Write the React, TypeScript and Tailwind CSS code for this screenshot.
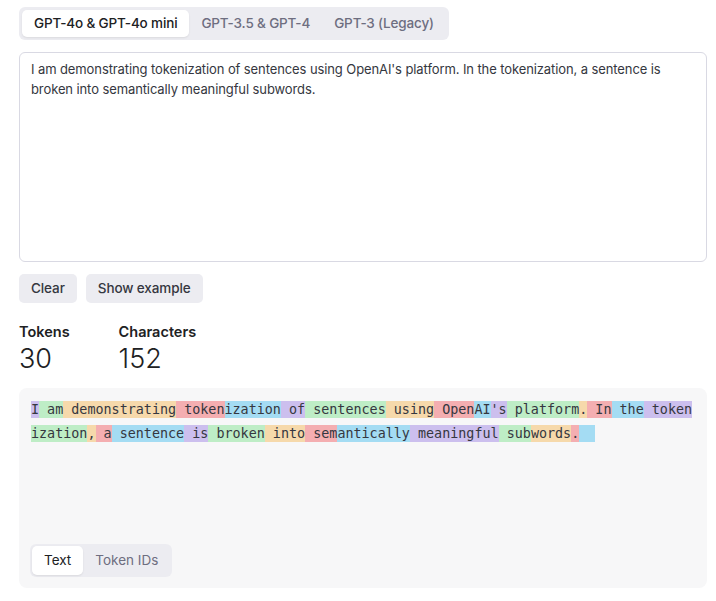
import React from 'react';

const tokenColors = [
  'bg-[rgba(107,64,216,0.3)]',
  'bg-[rgba(104,222,122,0.4)]',
  'bg-[rgba(244,172,54,0.4)]',
  'bg-[rgba(239,65,70,0.4)]',
  'bg-[rgba(39,181,234,0.4)]',
];

const tokens = [
  'I', ' am', ' demonstrating', ' token', 'ization', ' of', ' sentences', ' using', ' Open', 'AI',
  "'s", ' platform', '.', ' In', ' the', ' token', 'ization', ',', ' a', ' sentence',
  ' is', ' broken', ' into', ' sem', 'antically', ' meaningful', ' sub', 'words', '.', '  ',
];

const text =
  "I am demonstrating tokenization of sentences using OpenAI's platform. In the tokenization, a sentence is broken into semantically meaningful subwords.";

export default function App() {
  const [model, setModel] = React.useState(0);
  const [view, setView] = React.useState<'text' | 'ids'>('text');

  const models = ['GPT-4o & GPT-4o mini', 'GPT-3.5 & GPT-4', 'GPT-3 (Legacy)'];

  return (
    <div className="min-h-screen bg-white pl-[19px] pt-[7px] font-['Inter','Noto_Sans',sans-serif] text-[#202123]">
      <div className="w-[688px]">
        {/* model tabs */}
        <div className="inline-flex rounded-md bg-[#ececf1] p-[3px]">
          {models.map((m, i) => (
            <button
              key={m}
              onClick={() => setModel(i)}
              className={`h-[27px] rounded-[5px] px-[12px] text-[13.5px] font-medium tracking-[-0.15px] ${
                model === i ? 'bg-white text-[#202123] shadow-[0_1px_2px_rgba(0,0,0,0.08)]' : 'text-[#6e6e80]'
              }`}
            >
              {m}
            </button>
          ))}
        </div>

        {/* input */}
        <textarea
          defaultValue={text}
          className="mt-[12px] block h-[210px] w-full resize-none rounded-[6px] border border-[#d9d9e3] pl-[11px] pr-[14px] py-[6px] text-[13px] leading-[20px] tracking-[-0.1px] text-[#353740] outline-none"
        />

        {/* actions */}
        <div className="mt-[12px] flex gap-[9px]">
          <button className="h-[29px] rounded-[5px] bg-[#ececf1] px-[12px] text-[13.5px] font-medium tracking-[-0.1px] text-[#353740]">
            Clear
          </button>
          <button className="h-[29px] rounded-[5px] bg-[#ececf1] px-[12px] text-[13.5px] font-medium tracking-[-0.1px] text-[#353740]">
            Show example
          </button>
        </div>

        {/* stats */}
        <div className="mt-[19px] flex gap-[49px]">
          <div>
            <div className="text-[14.5px] font-semibold leading-[20px]">Tokens</div>
            <div className="text-[27px] font-light leading-[34px]">30</div>
          </div>
          <div>
            <div className="text-[14.5px] font-semibold leading-[20px]">Characters</div>
            <div className="text-[27px] font-light leading-[34px]">152</div>
          </div>
        </div>

        {/* output */}
        <div className="mt-[12px] flex h-[200px] flex-col justify-between rounded-[8px] bg-[#f7f7f8] px-[12px] pt-[10px] pb-[11px]">
          <div className="whitespace-pre-wrap break-all font-['DejaVu_Sans_Mono',monospace] text-[13.4px] leading-[24px] text-[#353740]">
            {view === 'text'
              ? tokens.map((t, i) => (
                  <span key={i} className={`py-px ${tokenColors[i % 5]}`}>
                    {t}
                  </span>
                ))
              : null}
          </div>
          <div className="-ml-px inline-flex self-start rounded-md bg-[#ececf1] p-[2px]">
            <button
              onClick={() => setView('text')}
              className={`h-[29px] rounded-[5px] px-[12px] text-[13.5px] ${
                view === 'text' ? 'bg-white text-[#202123] shadow-[0_1px_2px_rgba(0,0,0,0.08)]' : 'text-[#6e6e80]'
              }`}
            >
              Text
            </button>
            <button
              onClick={() => setView('ids')}
              className={`h-[29px] rounded-[5px] px-[12px] text-[13.5px] ${
                view === 'ids' ? 'bg-white text-[#202123] shadow-[0_1px_2px_rgba(0,0,0,0.08)]' : 'text-[#6e6e80]'
              }`}
            >
              Token IDs
            </button>
          </div>
        </div>
      </div>
    </div>
  );
}
